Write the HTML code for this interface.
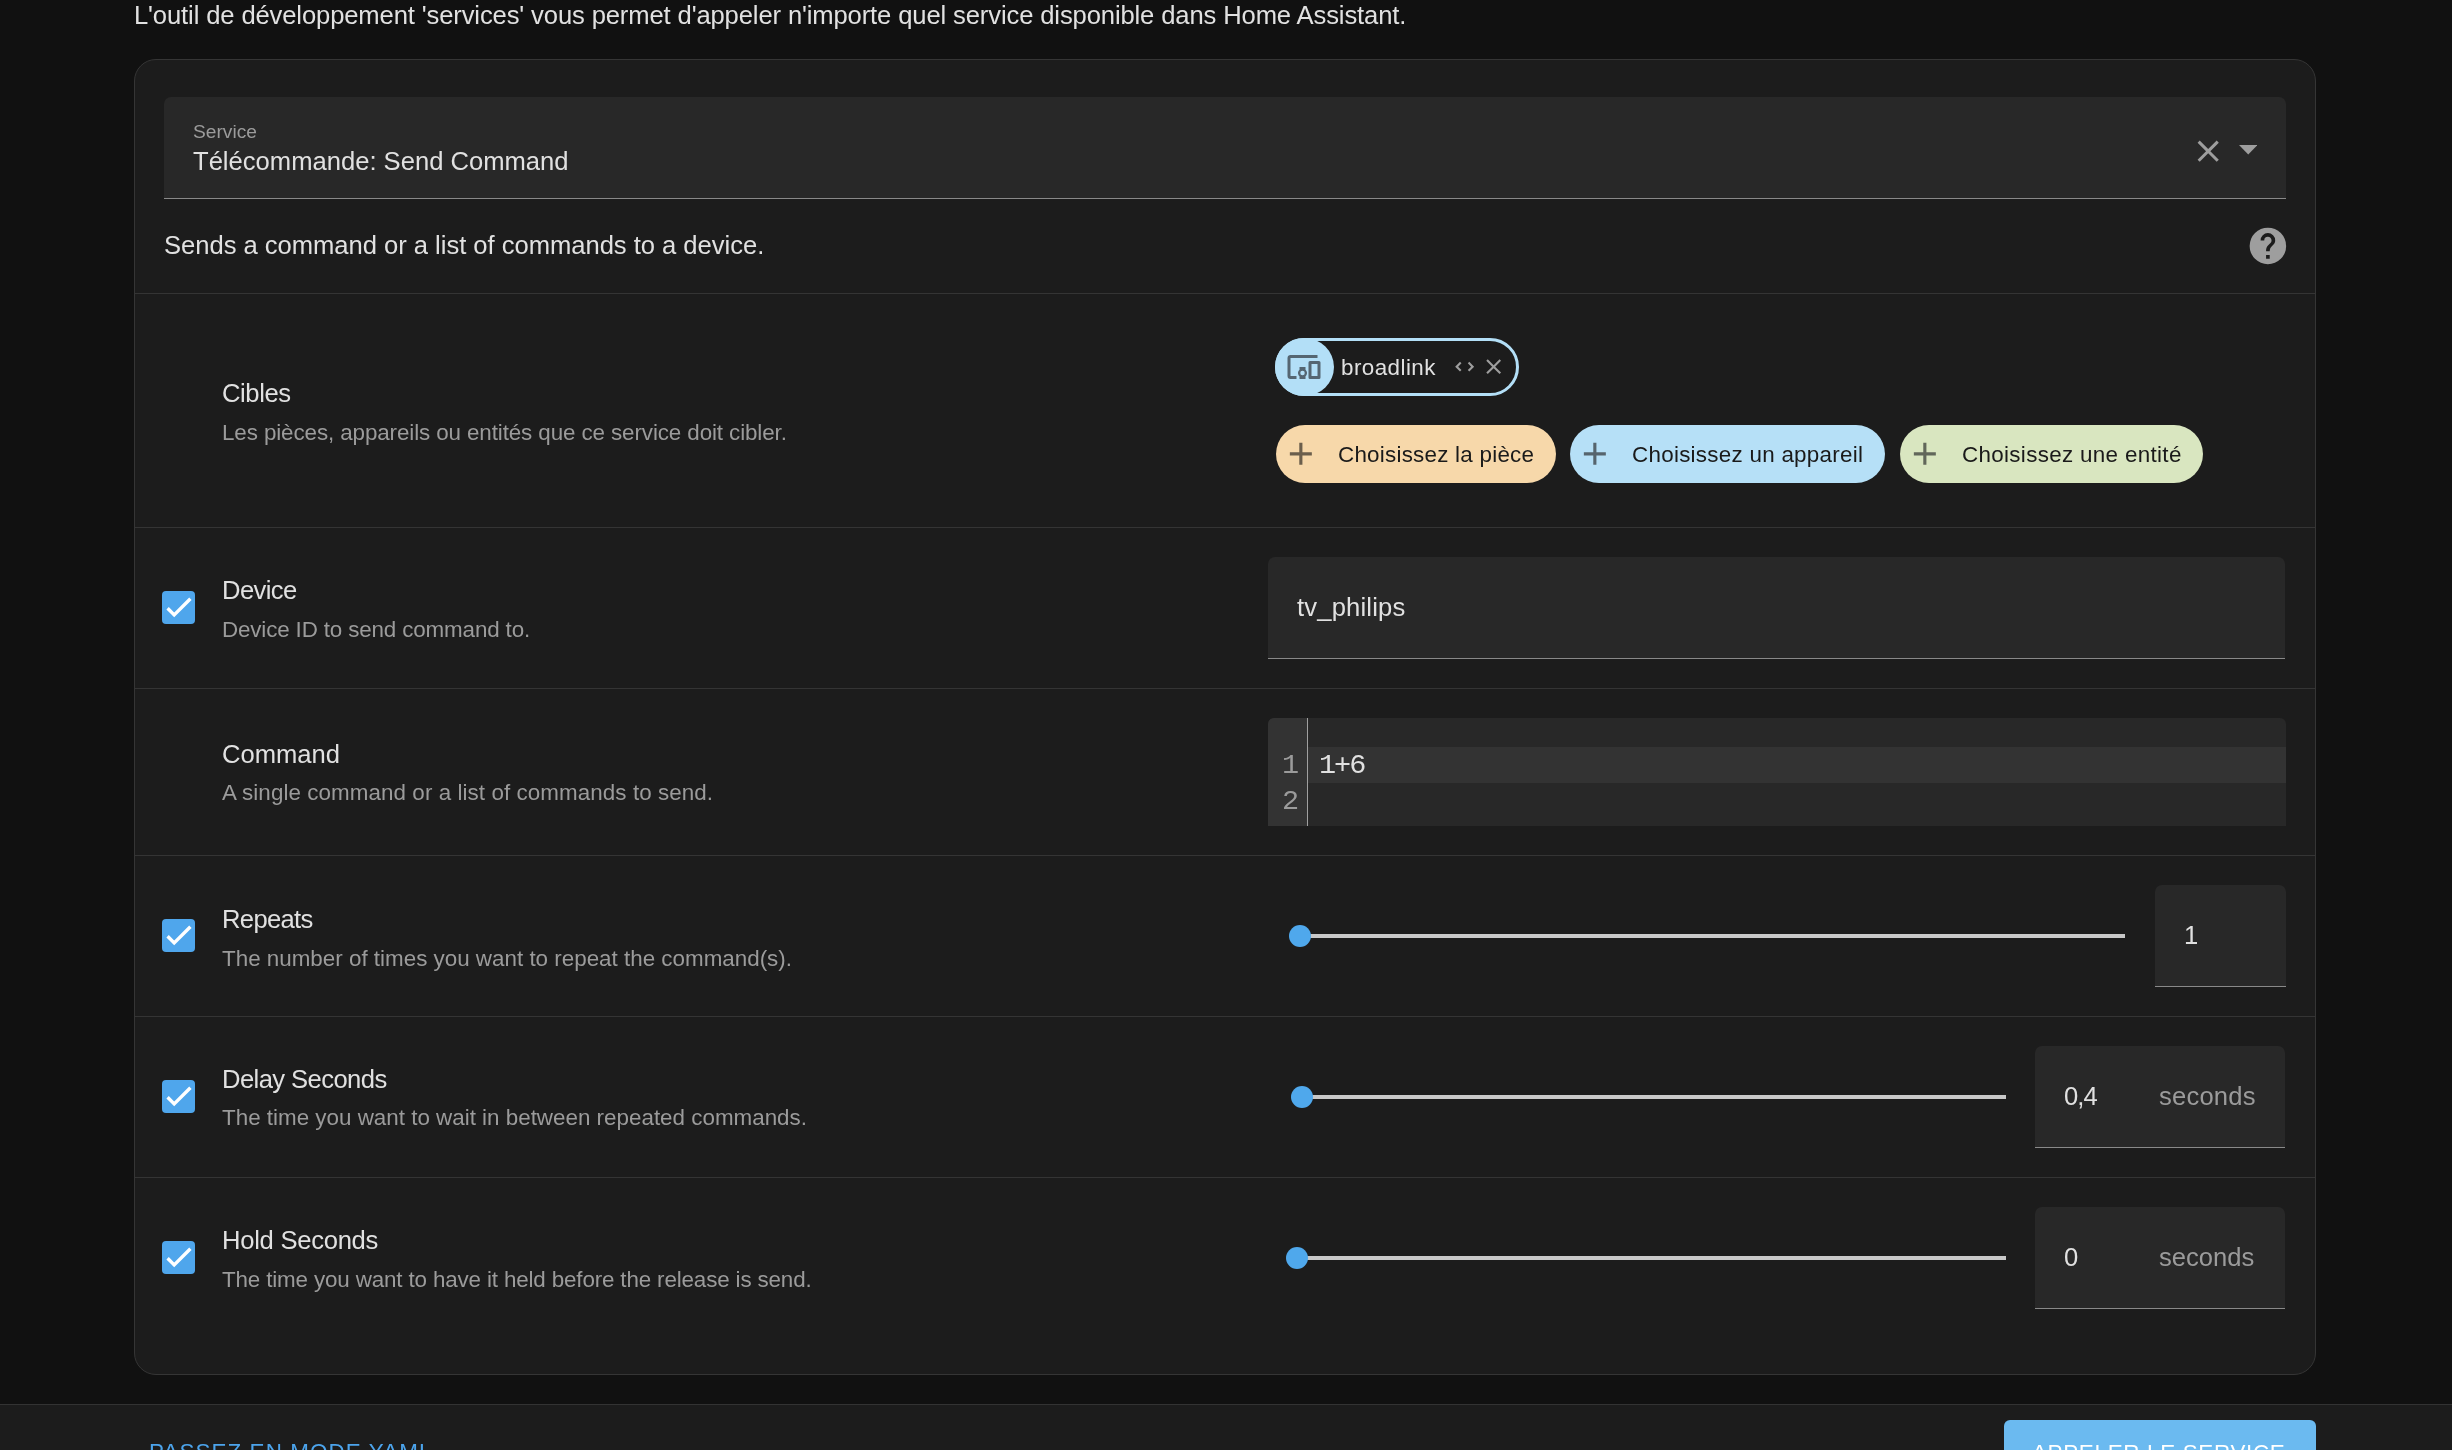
<!DOCTYPE html>
<html><head><meta charset="utf-8">
<style>
html,body{margin:0;padding:0;background:#111111;width:2452px;height:1450px;overflow:hidden;}
body{font-family:"Liberation Sans",sans-serif;color:#e1e1e1;position:relative;}
.a{position:absolute;}
.t{position:absolute;white-space:nowrap;line-height:1;will-change:transform;}
.card{position:absolute;left:134px;top:59px;width:2182px;height:1316px;box-sizing:border-box;background:#1c1c1c;border:1px solid #353535;border-radius:22px;}
.sep{position:absolute;left:135px;width:2180px;height:1px;background:#343434;}
.field{position:absolute;background:#282828;border-radius:7px 7px 0 0;}
.uline{position:absolute;left:0;right:0;bottom:0;height:1.5px;background:#898989;}
.cb{position:absolute;left:162px;width:33px;height:33px;border-radius:4px;background:#4fa6ec;}
.title{font-size:25.6px;color:#e1e1e1;}
.desc{font-size:22.4px;color:#9b9b9b;}
.track{position:absolute;height:4px;background:#c8c8c8;}
.knob{position:absolute;width:22.4px;height:22.4px;border-radius:50%;background:#4fa8ec;}
.btn{position:absolute;top:425px;height:58px;border-radius:29px;}
.btxt{font-size:22.4px;color:#1a1a1a;}
</style></head><body>
<div class="t" id="t1" style="left:134px;top:3px;font-size:25.6px;letter-spacing:-0.126px;">L'outil de développement 'services' vous permet d'appeler n'importe quel service disponible dans Home Assistant.</div>

<div class="card"></div>

<!-- service field -->
<div class="field" style="left:164px;top:97px;width:2122px;height:102px;"><div class="uline"></div></div>
<div class="t" id="t2" style="left:193px;top:122px;font-size:19.2px;color:#9b9b9b;">Service</div>
<div class="t" id="t3" style="left:193px;top:149px;font-size:25.6px;">Télécommande: Send Command</div>
<svg class="a" style="left:2190px;top:133px;" width="36.4" height="36.4" viewBox="0 0 24 24"><path fill="#9e9e9e" d="M19,6.41L17.59,5L12,10.59L6.41,5L5,6.41L10.59,12L5,17.59L6.41,19L12,13.41L17.59,19L19,17.59L13.41,12L19,6.41Z"/></svg>
<svg class="a" style="left:2238.5px;top:144.5px;" width="18.5" height="10" viewBox="0 0 18.5 10"><path d="M0 0H18.5L9.25 9.6Z" fill="#9e9e9e"/></svg>

<div class="t" id="t4" style="left:164px;top:233px;font-size:25.6px;letter-spacing:-0.030px;">Sends a command or a list of commands to a device.</div>
<svg class="a" style="left:2246px;top:224px;" width="43.8" height="43.8" viewBox="0 0 24 24"><circle cx="12" cy="12" r="10" fill="#9e9e9e"/><path fill="#1c1c1c" d="M15.07,11.25L14.17,12.17C13.45,12.89 13,13.5 13,15H11V14.5C11,13.39 11.45,12.39 12.17,11.67L13.41,10.41C13.78,10.05 14,9.55 14,9C14,7.89 13.1,7 12,7A2,2 0 0,0 10,9H8A4,4 0 0,1 12,5A4,4 0 0,1 16,9C16,9.88 15.64,10.67 15.07,11.25M13,19H11V17H13V19Z"/></svg>

<div class="sep" style="top:293px;"></div>
<div class="sep" style="top:527px;"></div>
<div class="sep" style="top:688px;"></div>
<div class="sep" style="top:855px;"></div>
<div class="sep" style="top:1016px;"></div>
<div class="sep" style="top:1177px;"></div>


<!-- Cibles row -->
<div class="t title" id="t5" style="left:222px;top:381px;letter-spacing:-0.400px;">Cibles</div>
<div class="t desc" id="t6" style="left:222px;top:422px;letter-spacing:-0.108px;">Les pièces, appareils ou entités que ce service doit cibler.</div>

<div class="a" style="left:1275px;top:338px;width:244px;height:58px;box-sizing:border-box;border:3px solid #b3dff7;border-radius:29px;background:#1c1c1c;"></div>
<div class="a" style="left:1275px;top:338px;width:59px;height:58px;border-radius:50%;background:#b3dff7;"></div>
<svg class="a" style="left:1286px;top:349px;" width="36" height="36" viewBox="0 0 24 24"><path fill="#556672" d="M3,6H21V4H3C1.89,4 1,4.89 1,6V18A2,2 0 0,0 3,20H7V18H3V6M13,12H9V13.78C8.39,14.33 8,15.11 8,16C8,16.89 8.39,17.67 9,18.22V20H13V18.22C13.61,17.67 14,16.88 14,16C14,15.12 13.61,14.33 13,13.78V12M11,17.5A1.5,1.5 0 0,1 9.5,16A1.5,1.5 0 0,1 11,14.5A1.5,1.5 0 0,1 12.5,16A1.5,1.5 0 0,1 11,17.5M22,8H16A1,1 0 0,0 15,9V19A1,1 0 0,0 16,20H22A1,1 0 0,0 23,19V9A1,1 0 0,0 22,8M21,18H17V10H21V18Z"/></svg>
<div class="t" id="t7" style="left:1341px;top:357px;font-size:22.4px;color:#e1e1e1;letter-spacing:0.440px;">broadlink</div>
<svg class="a" style="left:1451.8px;top:353.8px;" width="25.3" height="25.3" viewBox="0 0 24 24"><path fill="#9e9e9e" d="M18.17,12L15,8.83L16.41,7.41L21,12L16.41,16.58L15,15.17L18.17,12M5.83,12L9,15.17L7.59,16.59L3,12L7.59,7.42L9,8.83L5.83,12Z"/></svg>
<svg class="a" style="left:1481px;top:354px;" width="25.3" height="25.3" viewBox="0 0 24 24"><path fill="#9e9e9e" d="M19,6.41L17.59,5L12,10.59L6.41,5L5,6.41L10.59,12L5,17.59L6.41,19L12,13.41L17.59,19L19,17.59L13.41,12L19,6.41Z"/></svg>

<div class="btn" style="left:1276px;width:280px;background:#f7d8aa;"></div>
<svg class="a" style="left:1282.15px;top:435.45px;" width="37.7" height="37.7" viewBox="0 0 24 24"><path fill="#6b5e4c" d="M19,13H13V19H11V13H5V11H11V5H13V11H19V13Z"/></svg>
<div class="t btxt" id="t8" style="left:1338px;top:444px;letter-spacing:0.240px;">Choisissez la pièce</div>

<div class="btn" style="left:1570px;width:315px;background:#b6e0f7;"></div>
<svg class="a" style="left:1576.15px;top:435.45px;" width="37.7" height="37.7" viewBox="0 0 24 24"><path fill="#56646d" d="M19,13H13V19H11V13H5V11H11V5H13V11H19V13Z"/></svg>
<div class="t btxt" id="t9" style="left:1632px;top:444px;letter-spacing:0.270px;">Choisissez un appareil</div>

<div class="btn" style="left:1900px;width:303px;background:#d9e6c0;"></div>
<svg class="a" style="left:1906.15px;top:435.45px;" width="37.7" height="37.7" viewBox="0 0 24 24"><path fill="#61675a" d="M19,13H13V19H11V13H5V11H11V5H13V11H19V13Z"/></svg>
<div class="t btxt" id="t10" style="left:1962px;top:444px;letter-spacing:0.325px;">Choisissez une entité</div>

<!-- Device row -->
<div class="cb" style="top:591px;"><svg width="33" height="33" viewBox="0 0 33 33"><path d="M5.6 17.3L12.2 23.9L28.4 7.7" fill="none" stroke="#fff" stroke-width="3.4"/></svg></div>
<div class="t title" id="t11" style="left:222px;top:578px;letter-spacing:-0.600px;">Device</div>
<div class="t desc" id="t12" style="left:222px;top:619px;letter-spacing:-0.150px;">Device ID to send command to.</div>
<div class="field" style="left:1268px;top:557px;width:1017px;height:102px;"><div class="uline"></div></div>
<div class="t" id="t13" style="left:1297px;top:595px;font-size:25.6px;letter-spacing:0.170px;">tv_philips</div>

<!-- Command row -->
<div class="t title" id="t14" style="left:222px;top:742px;">Command</div>
<div class="t desc" id="t15" style="left:222px;top:782px;letter-spacing:0.070px;">A single command or a list of commands to send.</div>
<div class="a" style="left:1268px;top:718px;width:1018px;height:108px;background:#282828;border-radius:6px 6px 0 0;overflow:hidden;">
  <div class="a" style="left:0;top:0;width:39px;height:108px;background:#333333;"></div>
  <div class="a" style="left:39px;top:0;width:1px;height:108px;background:#a0a0a0;"></div>
  <div class="a" style="left:40px;top:29px;right:0;height:36px;background:#333333;"></div>
</div>
<div class="t" id="t16" style="left:1282px;top:752px;font-size:28.5px;letter-spacing:-1px;color:#9b9b9b;font-family:'Liberation Mono',monospace;">1</div>
<div class="t" id="t17" style="left:1282px;top:788px;font-size:28.5px;letter-spacing:-1px;color:#9b9b9b;font-family:'Liberation Mono',monospace;">2</div>
<div class="t" id="t18" style="left:1319px;top:752px;font-size:28.5px;letter-spacing:-2px;color:#e1e1e1;font-family:'Liberation Mono',monospace;">1+6</div>

<!-- Repeats row -->
<div class="cb" style="top:919px;"><svg width="33" height="33" viewBox="0 0 33 33"><path d="M5.6 17.3L12.2 23.9L28.4 7.7" fill="none" stroke="#fff" stroke-width="3.4"/></svg></div>
<div class="t title" id="t19" style="left:222px;top:907px;letter-spacing:-0.670px;">Repeats</div>
<div class="t desc" id="t20" style="left:222px;top:948px;">The number of times you want to repeat the command(s).</div>
<div class="track" style="left:1300px;top:934px;width:825px;"></div>
<div class="knob" style="left:1288.8px;top:924.8px;"></div>
<div class="field" style="left:2155px;top:885px;width:131px;height:102px;"><div class="uline"></div></div>
<div class="t" id="t21" style="left:2184px;top:923px;font-size:25.6px;">1</div>

<!-- Delay row -->
<div class="cb" style="top:1080px;"><svg width="33" height="33" viewBox="0 0 33 33"><path d="M5.6 17.3L12.2 23.9L28.4 7.7" fill="none" stroke="#fff" stroke-width="3.4"/></svg></div>
<div class="t title" id="t22" style="left:222px;top:1067px;letter-spacing:-0.580px;">Delay Seconds</div>
<div class="t desc" id="t23" style="left:222px;top:1107px;">The time you want to wait in between repeated commands.</div>
<div class="track" style="left:1300px;top:1095px;width:706px;"></div>
<div class="knob" style="left:1290.8px;top:1085.8px;"></div>
<div class="field" style="left:2035px;top:1046px;width:250px;height:102px;"><div class="uline"></div></div>
<div class="t" id="t24" style="left:2064px;top:1084px;font-size:25.6px;letter-spacing:-0.900px;">0,4</div>
<div class="t" id="t25" style="left:2159px;top:1084px;font-size:25.6px;color:#9b9b9b;letter-spacing:0.200px;">seconds</div>

<!-- Hold row -->
<div class="cb" style="top:1241px;"><svg width="33" height="33" viewBox="0 0 33 33"><path d="M5.6 17.3L12.2 23.9L28.4 7.7" fill="none" stroke="#fff" stroke-width="3.4"/></svg></div>
<div class="t title" id="t26" style="left:222px;top:1228px;letter-spacing:-0.270px;">Hold Seconds</div>
<div class="t desc" id="t27" style="left:222px;top:1269px;letter-spacing:-0.150px;">The time you want to have it held before the release is send.</div>
<div class="track" style="left:1297px;top:1256px;width:709px;"></div>
<div class="knob" style="left:1285.8px;top:1246.8px;"></div>
<div class="field" style="left:2035px;top:1207px;width:250px;height:102px;"><div class="uline"></div></div>
<div class="t" id="t28" style="left:2064px;top:1245px;font-size:25.6px;">0</div>
<div class="t" id="t29" style="left:2159px;top:1245px;font-size:25.6px;color:#9b9b9b;">seconds</div>

<!-- footer -->
<div class="a" style="left:0;top:1404px;width:2452px;height:46px;background:#1c1c1c;border-top:1px solid #333333;"></div>
<div class="t" id="t30" style="left:149px;top:1441px;font-size:22.4px;color:#4ca4ec;letter-spacing:1.100px;">PASSEZ EN MODE YAML</div>
<div class="a" style="left:2004px;top:1420px;width:312px;height:60px;background:#6bbaf0;border-radius:6px;"></div>
<div class="t" id="t31" style="left:2032px;top:1442px;font-size:22.4px;color:#ffffff;letter-spacing:0.690px;">APPELER LE SERVICE</div>

</body></html>
